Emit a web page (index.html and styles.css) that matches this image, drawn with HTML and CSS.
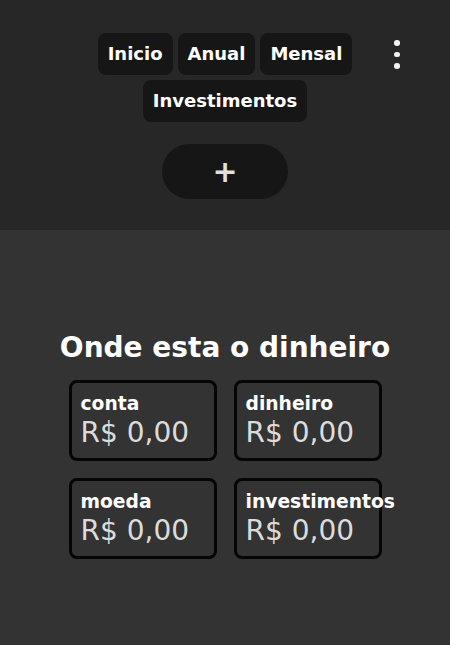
FILE: index.html
```html
<!DOCTYPE html>
<html lang="pt">
<head>
<meta charset="utf-8">
<title>Onde esta o dinheiro</title>
<link rel="stylesheet" href="styles.css">
</head>
<body>
<header class="header">
  <nav class="nav">
    <button class="nav-btn">Inicio</button>
    <button class="nav-btn">Anual</button>
    <button class="nav-btn">Mensal</button>
    <button class="nav-btn">Investimentos</button>
  </nav>
  <button class="menu-btn" aria-label="menu">
    <span class="dot"></span><span class="dot"></span><span class="dot"></span>
  </button>
  <button class="add-btn">+</button>
</header>
<main class="main">
  <h2 class="title">Onde esta o dinheiro</h2>
  <div class="grid">
    <div class="card"><div class="card-label">conta</div><div class="card-value">R$ 0,00</div></div>
    <div class="card"><div class="card-label">dinheiro</div><div class="card-value">R$ 0,00</div></div>
    <div class="card"><div class="card-label">moeda</div><div class="card-value">R$ 0,00</div></div>
    <div class="card"><div class="card-label">investimentos</div><div class="card-value">R$ 0,00</div></div>
  </div>
</main>
</body>
</html>
```
FILE: styles.css
```css
* { box-sizing: border-box; }
html, body { margin: 0; padding: 0; }
body {
  font-family: "DejaVu Sans", sans-serif;
  background: #333333;
  color: #fff;
  height: 645px;
  overflow: hidden;
}
.header {
  position: relative;
  background: #272727;
  height: 230px;
  padding-top: 33px;
  display: flex;
  flex-direction: column;
  align-items: center;
}
.nav {
  width: 260px;
  display: flex;
  flex-wrap: wrap;
  justify-content: center;
  gap: 5px 5px;
}
.nav-btn {
  font-family: "DejaVu Sans", sans-serif;
  font-weight: bold;
  font-size: 18px;
  line-height: 22px;
  color: #fff;
  background: #161616;
  border: none;
  border-radius: 8px;
  padding: 10px 10px;
  margin: 0;
}
.menu-btn {
  position: absolute;
  top: 40px;
  right: 47px;
  width: 12px;
  background: none;
  border: none;
  padding: 0;
  display: flex;
  flex-direction: column;
  align-items: center;
  gap: 6px;
}
.dot {
  width: 5.5px;
  height: 5.5px;
  border-radius: 50%;
  background: #f2f2f2;
}
.add-btn {
  margin-top: 22px;
  width: 126px;
  height: 55px;
  border: none;
  border-radius: 28px;
  background: #161616;
  color: #e0e0e0;
  font-family: "DejaVu Sans", sans-serif;
  font-weight: bold;
  font-size: 30px;
  line-height: 1;
  padding: 0;
}
.main {
  padding-top: 101px;
  display: flex;
  flex-direction: column;
  align-items: center;
}
.title {
  margin: 0;
  font-size: 28px;
  font-weight: bold;
  line-height: 33px;
  color: #fff;
}
.grid {
  margin-top: 16px;
  display: grid;
  grid-template-columns: 148px 148px;
  gap: 17px;
}
.card {
  height: 81px;
  border: 3px solid #050505;
  border-radius: 8px;
  padding: 10px 9px 9px;
}
.card-label {
  font-size: 18.72px;
  font-weight: bold;
  line-height: 21px;
  color: #fff;
  white-space: nowrap;
}
.card-value {
  margin-top: 2px;
  font-size: 28px;
  line-height: 33px;
  color: #dcdcdc;
  white-space: nowrap;
}
```
